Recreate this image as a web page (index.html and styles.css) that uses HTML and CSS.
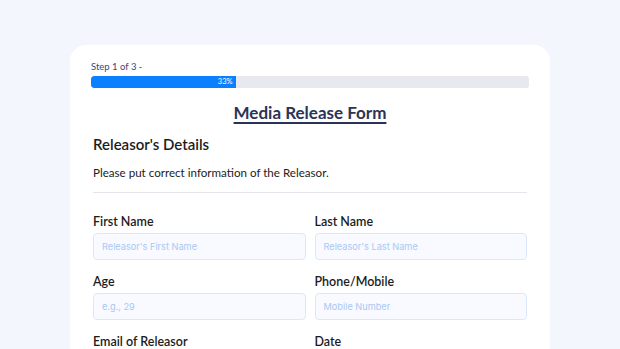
FILE: index.html
```html
<!DOCTYPE html>
<html lang="en">
<head>
  <meta charset="UTF-8">
  <meta name="viewport" content="width=device-width, initial-scale=1.0">
  <title>Media Release Form</title>
  <link rel="stylesheet" href="styles.css">
</head>
<body>
  <div class="card">
    <!-- Progress -->
    <div class="step-text">Step 1 of 3 -</div>
    <div class="progress">
      <div class="progress-fill" style="width: 33%">33%</div>
    </div>
    <h1 class="form-title">Media Release Form</h1>
    <div class="section">
      <h2>Releasor's Details</h2>
      <p class="section-info">Please put correct information of the Releasor.</p>
      <hr class="divider">
      <div class="form-grid">
        <div class="field">
          <label>First Name</label>
          <input type="text" placeholder="Releasor's First Name">
        </div>
        <div class="field">
          <label>Last Name</label>
          <input type="text" placeholder="Releasor's Last Name">
        </div>
        <div class="field">
          <label>Age</label>
          <input type="text" placeholder="e.g., 29">
        </div>
        <div class="field">
          <label>Phone/Mobile</label>
          <input type="text" placeholder="Mobile Number">
        </div>
        <div class="field">
          <label>Email of Releasor</label>
          <input type="text" placeholder="Email Address">
        </div>
        <div class="field">
          <label>Date</label>
          <input type="text" placeholder="MM/DD/YYYY">
        </div>
      </div>
    </div>
  </div>
</body>
</html>
```

FILE: styles.css
```css
body {
  font-family: 'Lato', sans-serif;
  margin: 0;
  padding: 45px 70px 0 70px;
  background: #f3f6fd;
  color: #1c1c1c;
  overflow: hidden;
  height: 349px;
  box-sizing: border-box;
}
.card {
  background: #fff;
  border-radius: 16px;
  padding: 16px 21px 40px 21px;
  min-height: 400px;
  box-sizing: border-box;
}
.step-text {
  font-size: 9.5px;
  color: #3d4670;
  line-height: 12px;
  margin-bottom: 3px;
}
.progress {
  height: 12px;
  background: #e8e9ee;
  border-radius: 3px;
  overflow: hidden;
}
.progress-fill {
  height: 100%;
  background: #0a80ff;
  color: #fff;
  font-size: 7.5px;
  line-height: 12px;
  text-align: right;
  padding-right: 3px;
  box-sizing: border-box;
  border-radius: 3px 0 0 3px;
}
.form-title {
  text-align: center;
  font-size: 17px;
  font-weight: bold;
  color: #2b3456;
  text-decoration: underline;
  text-underline-offset: 3px;
  text-decoration-thickness: 2px;
  margin: 14px 0 0 0;
  line-height: 22px;
}
.section {
  padding: 0 2px;
}
.section h2 {
  font-size: 15px;
  font-weight: 600;
  margin: 10px 0 0 0;
  line-height: 20px;
}
.section-info {
  font-size: 11.6px;
  margin: 11px 0 0 0;
  line-height: 16px;
}
.divider {
  border: none;
  border-top: 1px solid #e3e5ea;
  margin: 11px 0 0 0;
}
.form-grid {
  display: grid;
  grid-template-columns: 1fr 1fr;
  column-gap: 9px;
  row-gap: 14px;
  margin-top: 21px;
}
.field label {
  display: block;
  font-size: 12.5px;
  font-weight: 600;
  line-height: 16px;
  margin-bottom: 3px;
}
.field input {
  width: 100%;
  box-sizing: border-box;
  height: 27px;
  border: 1px solid #dbe8fb;
  background: #f8faff;
  border-radius: 4px;
  padding: 0 8px;
  font-family: 'Inter', sans-serif;
  font-size: 9.2px;
  color: #333;
}
.field input::placeholder {
  color: #a9c8f4;
}
```
